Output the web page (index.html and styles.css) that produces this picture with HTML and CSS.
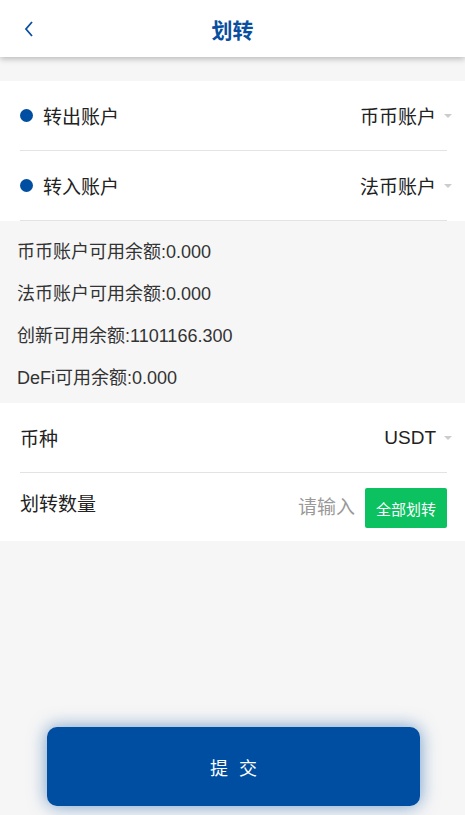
FILE: index.html
```html
<!DOCTYPE html>
<html lang="zh-CN">
<head>
  <meta charset="UTF-8">
  <meta name="viewport" content="width=device-width, initial-scale=1.0">
  <title>划转</title>
  <link rel="stylesheet" href="styles.css">
</head>
<body>
  <div class="header">
    <span class="back">
      <svg width="12" height="18" viewBox="0 0 12 18"><path d="M9 2 L3 9 L9 16" fill="none" stroke="#0a4ea0" stroke-width="1.8"/></svg>
    </span>
    <h1>划转</h1>
  </div>

  <!-- 账户选择 -->
  <div class="panel">
    <div class="row">
      <div class="label"><span class="dot"></span>转出账户</div>
      <div class="select">币币账户<span class="caret"></span></div>
    </div>
    <div class="row">
      <div class="label"><span class="dot"></span>转入账户</div>
      <div class="select">法币账户<span class="caret"></span></div>
    </div>
  </div>

  <!-- 余额 -->
  <div class="balances">
    <p>币币账户可用余额:0.000</p>
    <p>法币账户可用余额:0.000</p>
    <p>创新可用余额:1101166.300</p>
    <p>DeFi可用余额:0.000</p>
  </div>

  <div class="panel panel-coin">
    <div class="row">
      <div class="label">币种</div>
      <div class="select">USDT<span class="caret"></span></div>
    </div>
    <div class="row row-amount">
      <div class="label">划转数量</div>
      <div class="amount">
        <input type="text" placeholder="请输入">
        <button class="all-btn">全部划转</button>
      </div>
    </div>
  </div>

  <div class="footer">
    <button class="submit">提 交</button>
  </div>
</body>
</html>
```

FILE: styles.css
```css
body {
  margin: 0;
  padding: 0;
  background: #f6f6f6;
  font-family: "Liberation Sans", "Noto Sans CJK SC", sans-serif;
  color: #222;
  height: 815px;
  display: flex;
  flex-direction: column;
}

.header {
  height: 57px;
  background: #fff;
  box-shadow: 0 2px 6px rgba(0, 0, 0, 0.25);
  display: flex;
  align-items: center;
  justify-content: center;
  position: relative;
  margin-bottom: 24px;
}

.header h1 {
  margin: 0;
  font-size: 21px;
  font-weight: bold;
  color: #0a4ea0;
}

.back {
  position: absolute;
  left: 23px;
  top: 20px;
}

.panel {
  background: #fff;
  padding: 0 18px 0 20px;
}

.row {
  height: 69px;
  display: flex;
  align-items: center;
  justify-content: space-between;
  border-bottom: 1px solid #e3e3e3;
}

.label {
  display: flex;
  align-items: center;
  font-size: 19px;
  color: #222;
}

.dot {
  width: 13px;
  height: 13px;
  border-radius: 50%;
  background: #004ea2;
  margin-right: 10px;
}

.select {
  display: flex;
  align-items: center;
  font-size: 19px;
  color: #222;
}

.caret {
  width: 0;
  height: 0;
  border-left: 4px solid transparent;
  border-right: 4px solid transparent;
  border-top: 4px solid #ccc;
  margin-left: 8px;
  margin-right: -5px;
}

.balances {
  padding: 10px 17px 4px;
}

.balances p {
  margin: 0;
  height: 42px;
  line-height: 42px;
  font-size: 18px;
  color: #333;
}

.panel-coin .row-amount {
  border-bottom: none;
  align-items: flex-start;
  height: 68px;
}

.row-amount .label {
  margin-top: 16px;
}

.amount {
  display: flex;
  align-items: center;
  margin-top: 15px;
}

.amount input {
  width: 62px;
  border: none;
  outline: none;
  font-size: 19px;
  text-align: right;
  font-family: inherit;
  margin-right: 10px;
  padding: 0;
}

.amount input::placeholder {
  color: #999;
}

.all-btn {
  background: #0cc160;
  color: #fff;
  border: none;
  border-radius: 2px;
  height: 40px;
  width: 82px;
  font-size: 15px;
  font-family: inherit;
  padding: 0;
}

.footer {
  margin-top: auto;
  padding: 0 45px 9px 47px;
}

.submit {
  width: 100%;
  height: 79px;
  background: #004ea2;
  color: #fff;
  border: none;
  border-radius: 10px;
  font-size: 18px;
  letter-spacing: 3px;
  text-indent: 3px;
  font-family: inherit;
  box-shadow: 0 0 18px rgba(0, 78, 162, 0.55);
}
```
